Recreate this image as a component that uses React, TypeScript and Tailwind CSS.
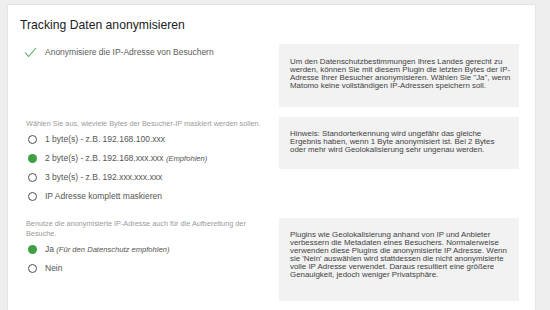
import React from "react";

const Radio = ({ checked, children }: { checked?: boolean; children: React.ReactNode }) => (
  <div className="flex items-center h-[19px]">
    <span
      className={
        checked
          ? "ml-[8px] w-[8.5px] h-[8.5px] rounded-full bg-[#3f9f43] shrink-0"
          : "ml-[8px] w-[8.5px] h-[8.5px] rounded-full border-[1.3px] border-[#505050] shrink-0"
      }
    />
    <span className="ml-[8.5px] text-[8.5px] leading-[10px] text-[#555555] whitespace-nowrap">{children}</span>
  </div>
);

const boxText = "bg-[#f2f2f2] px-[11px] text-[7.9px] leading-[8px] text-[#3f3f3f] whitespace-nowrap";

export default function App() {
  return (
    <div
      className="w-[550px] h-[310px] overflow-hidden bg-[#eeeeee] pt-[5px] pl-[8px]"
      style={{ fontFamily: '"Liberation Sans", Arial, sans-serif' }}
    >
      <div className="w-[527px] h-[330px] bg-white shadow-[0_0_2px_rgba(0,0,0,0.12)] pt-[12px] pl-[12px]">
        <h2 className="text-[12.2px] leading-[16px] text-[#212121]">Tracking Daten anonymisieren</h2>

        {/* Row 1 */}
        <div className="mt-[11px] flex">
          <div className="w-[259px]">
            <div className="flex items-center h-[16px]">
              <svg width="13" height="11" viewBox="0 0 13 11" className="ml-[4px]">
                <polyline points="1,5.5 4.5,9.5 12,1" fill="none" stroke="#5aa862" strokeWidth="1.1" />
              </svg>
              <span className="ml-[8px] text-[8.5px] leading-[10px] text-[#5a5a5a]">
                Anonymisiere die IP-Adresse von Besuchern
              </span>
            </div>
          </div>
          <div className={`w-[240px] h-[63px] pt-[14px] ${boxText}`}>
            Um den Datenschutzbestimmungen Ihres Landes gerecht zu
            <br />
            werden, können Sie mit diesem Plugin die letzten Bytes der IP-
            <br />
            Adresse Ihrer Besucher anonymisieren. Wählen Sie "Ja", wenn
            <br />
            Matomo keine vollständigen IP-Adressen speichern soll.
          </div>
        </div>

        {/* Row 2 */}
        <div className="mt-[10px] flex">
          <div className="w-[259px]">
            <div className="mt-[1.5px] pl-[6px] text-[7.3px] leading-[9.3px] text-[#9a9a9a] whitespace-nowrap">
              Wählen Sie aus, wieviele Bytes der Besucher-IP maskiert werden sollen.
            </div>
            <div className="mt-[2px] flex flex-col">
              <Radio>1 byte(s) - z.B. 192.168.100.xxx</Radio>
              <Radio checked>
                2 byte(s) - z.B. 192.168.xxx.xxx <i className="text-[7.6px]">(Empfohlen)</i>
              </Radio>
              <Radio>3 byte(s) - z.B. 192.xxx.xxx.xxx</Radio>
              <Radio>IP Adresse komplett maskieren</Radio>
            </div>
          </div>
          <div className={`w-[240px] h-[52px] pt-[13px] ${boxText}`}>
            Hinweis: Standorterkennung wird ungefähr das gleiche
            <br />
            Ergebnis haben, wenn 1 Byte anonymisiert ist. Bei 2 Bytes
            <br />
            oder mehr wird Geolokalisierung sehr ungenau werden.
          </div>
        </div>

        {/* Row 3 */}
        <div className="mt-[12px] flex">
          <div className="w-[259px]">
            <div className="mt-[1.5px] pl-[6px] text-[7.3px] leading-[9.3px] text-[#9a9a9a] whitespace-nowrap">
              Benutze die anonymisierte IP-Adresse auch für die Aufbereitung der
              <br />
              Besuche.
            </div>
            <div className="mt-[2px] flex flex-col">
              <Radio checked>
                Ja <i className="text-[7.6px]">(Für den Datenschutz empfohlen)</i>
              </Radio>
              <Radio>Nein</Radio>
            </div>
          </div>
          <div className={`w-[240px] h-[83px] pt-[13px] ${boxText}`}>
            Plugins wie Geolokalisierung anhand von IP und Anbieter
            <br />
            verbessern die Metadaten eines Besuchers. Normalerweise
            <br />
            verwenden diese Plugins die anonymisierte IP Adresse. Wenn
            <br />
            sie 'Nein' auswählen wird stattdessen die nicht anonymisierte
            <br />
            volle IP Adresse verwendet. Daraus resultiert eine größere
            <br />
            Genauigkeit, jedoch weniger Privatsphäre.
          </div>
        </div>
      </div>
    </div>
  );
}
